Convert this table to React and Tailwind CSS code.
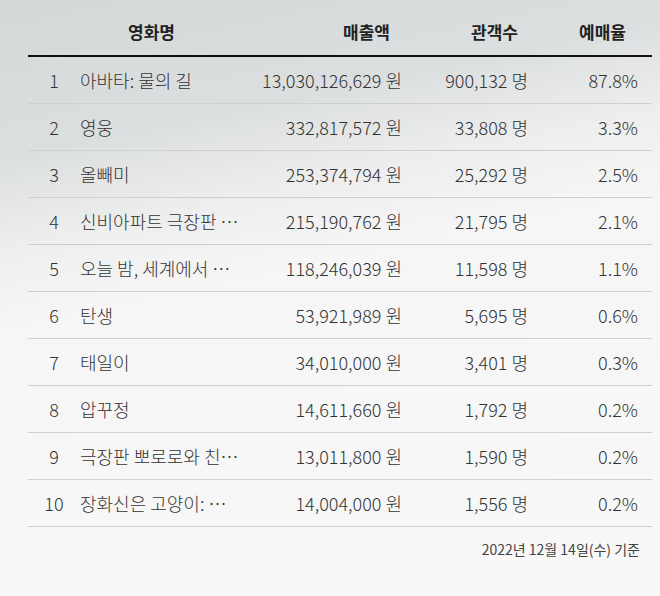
const rows = [
  ["1", "아바타: 물의 길", "13,030,126,629 원", "900,132 명", "87.8%"],
  ["2", "영웅", "332,817,572 원", "33,808 명", "3.3%"],
  ["3", "올빼미", "253,374,794 원", "25,292 명", "2.5%"],
  ["4", "신비아파트 극장판 …", "215,190,762 원", "21,795 명", "2.1%"],
  ["5", "오늘 밤, 세계에서 …", "118,246,039 원", "11,598 명", "1.1%"],
  ["6", "탄생", "53,921,989 원", "5,695 명", "0.6%"],
  ["7", "태일이", "34,010,000 원", "3,401 명", "0.3%"],
  ["8", "압꾸정", "14,611,660 원", "1,792 명", "0.2%"],
  ["9", "극장판 뽀로로와 친…", "13,011,800 원", "1,590 명", "0.2%"],
  ["10", "장화신은 고양이: …", "14,004,000 원", "1,556 명", "0.2%"]
];

const cols = "grid grid-cols-[52px_170px_152px_126px_110px_14px]";

export default function App() {
  return (
    <div
      className="h-[596px] w-[660px] overflow-hidden bg-[linear-gradient(168deg,#d5d8d9_0%,#dcdfe0_22%,#eeeeee_34%,#f6f6f6_45%,#f8f8f8_100%)] pl-[28px] pr-[8px] text-[#333]"
      style={{ fontFamily: '"Noto Sans CJK KR", "Noto Sans", sans-serif' }}
    >
      <div className={`${cols} h-[55px] items-center pt-[8px] text-[17px] font-bold text-[#222]`}>
        <div className="col-span-2 pl-[100px]">영화명</div>
        <div className="pr-3 text-right">매출액</div>
        <div className="pr-[10px] text-right">관객수</div>
        <div className="pr-3 text-right">예매율</div>
        <div />
      </div>
      <div className="h-[2px] bg-[#111]" />
      {rows.map((r) => (
        <div key={r[0]} className={`${cols} h-[47px] items-center border-b border-[#cfcfcf] text-[18px] font-light`}>
          <div className="text-center">{r[0]}</div>
          <div className="whitespace-nowrap">{r[1]}</div>
          <div className="whitespace-nowrap text-right">{r[2]}</div>
          <div className="whitespace-nowrap text-right">{r[3]}</div>
          <div className="text-right">{r[4]}</div>
          <div />
        </div>
      ))}
      <div className="pr-[12px] pt-[12px] text-right text-[14px] text-[#444]">2022년 12월 14일(수) 기준</div>
    </div>
  );
}
